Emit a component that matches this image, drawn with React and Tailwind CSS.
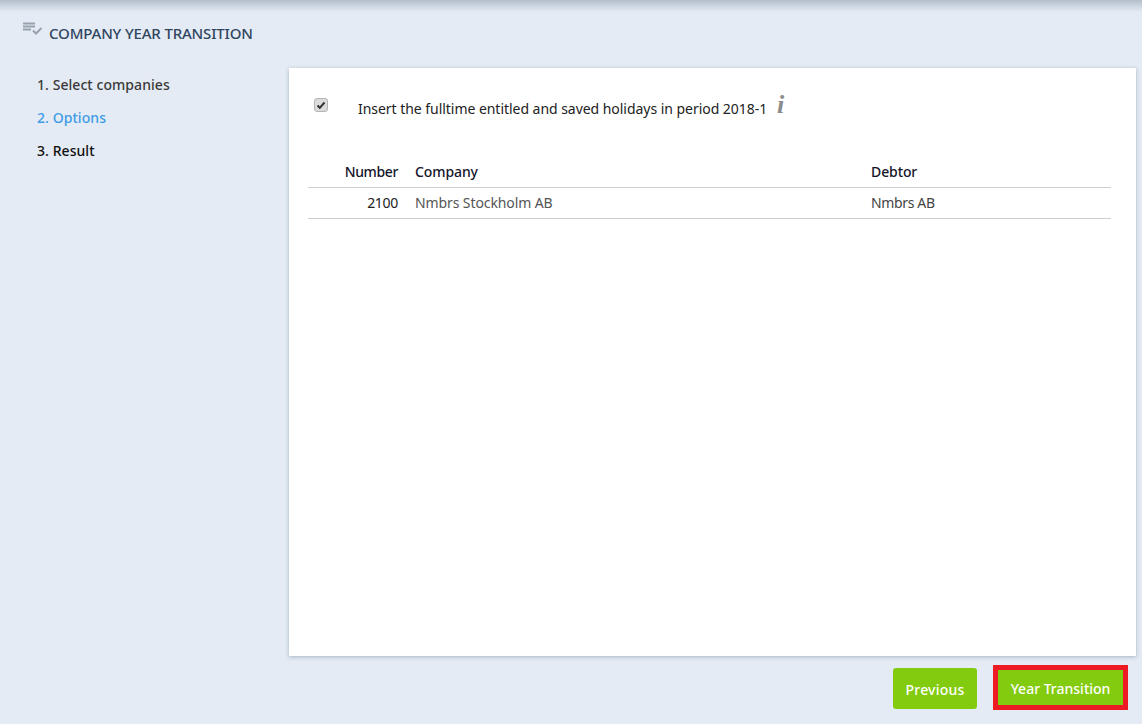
export default function App() {
  const font = { fontFamily: '"Noto Sans", sans-serif' };
  return (
    <div style={font} className="relative flex h-[724px] w-[1142px] flex-col overflow-hidden bg-[#e4ebf4] text-[14px]">
      <div className="h-[12px] shrink-0 bg-gradient-to-b from-[#b4bfcc] to-[#e4ebf4]" />
      <header className="flex h-[56px] shrink-0 items-start pl-[22px] pt-[8px]">
        <svg width="21" height="14" viewBox="0 0 21 14" className="mt-[2px]">
          <path d="M1 1.5h12M1 4.5h12M1 7.5h8" stroke="#98a1ae" strokeWidth="2" fill="none" />
          <path d="M11 8.5l3 3 5.5-5.5" stroke="#98a1ae" strokeWidth="2" fill="none" />
        </svg>
        <h1 className="ml-[6px] text-[15px] leading-[26px] font-medium tracking-[-0.17px] text-[#2f4560]">COMPANY YEAR TRANSITION</h1>
      </header>
      <div className="flex h-[588px] shrink-0">
        <nav className="w-[289px] shrink-0 pl-[37px] text-[14px] font-medium tracking-[0.06px]">
          <div className="h-[33px] leading-[33px] text-[#3a3a3a]">1. Select companies</div>
          <div className="h-[33px] leading-[33px] text-[#3f9be6]">2. Options</div>
          <div className="h-[33px] leading-[33px] text-[#111]">3. Result</div>
        </nav>
        <main className="w-[847px] shrink-0 bg-white pl-[19px] pr-[25px] shadow-[0_1px_4px_rgba(90,110,140,0.45)]">
          <div className="flex h-[87px] items-start pt-[28px]">
            <span className="ml-[6px] mt-[2px] flex h-[14px] w-[14px] items-center justify-center rounded-[3px] border border-[#b5b5b5] bg-[#dcdcdc]">
              <svg width="10" height="10" viewBox="0 0 10 10"><path d="M1.5 5.5l2.3 2.3 4.7-5.3" stroke="#333" strokeWidth="2" fill="none" /></svg>
            </span>
            <span className="ml-[30px] mt-[2px] text-[14px] leading-[22px] tracking-[-0.04px] text-[#222]">Insert the fulltime entitled and saved holidays in period 2018-1</span>
            <span style={{ fontFamily: '"Liberation Serif", serif' }} className="ml-[10px] -mt-[5px] text-[26px] leading-[28px] font-bold italic text-[#8b8b8b]">i</span>
          </div>
          <table className="w-[803px] table-fixed border-collapse text-[14px] tracking-[-0.1px]">
            <thead>
              <tr className="h-[32px] border-b border-[#cfcfcf] text-[#14142b]">
                <th className="w-[91px] pt-[2px] pr-[1px] text-right font-medium tracking-[-0.38px]">Number</th>
                <th className="w-[456px] pt-[2px] pl-[16px] text-left font-medium">Company</th>
                <th className="pt-[2px] pl-[16px] text-left font-medium">Debtor</th>
              </tr>
            </thead>
            <tbody>
              <tr className="h-[31px] border-b border-[#cfcfcf] text-[#444]">
                <td className="pr-[1px] text-right text-[#222] tracking-[-0.3px]">2100</td>
                <td className="pl-[16px] text-[#555]">Nmbrs Stockholm AB</td>
                <td className="pl-[16px] tracking-[-0.35px]">Nmbrs AB</td>
              </tr>
            </tbody>
          </table>
        </main>
      </div>
      <footer className="flex items-start justify-end pr-[14px] pt-[9px]">
        <button className="mt-[3px] h-[41px] w-[84px] rounded-[3px] bg-[#83cb0f] pt-[1px] text-[14px] font-medium tracking-[0.2px] text-white">Previous</button>
        <button className="ml-[16px] h-[45px] w-[135px] border-[5px] border-[#ed1c24] bg-[#83cb0f] pt-[2px] text-[14px] font-medium text-white">Year Transition</button>
      </footer>
    </div>
  );
}
